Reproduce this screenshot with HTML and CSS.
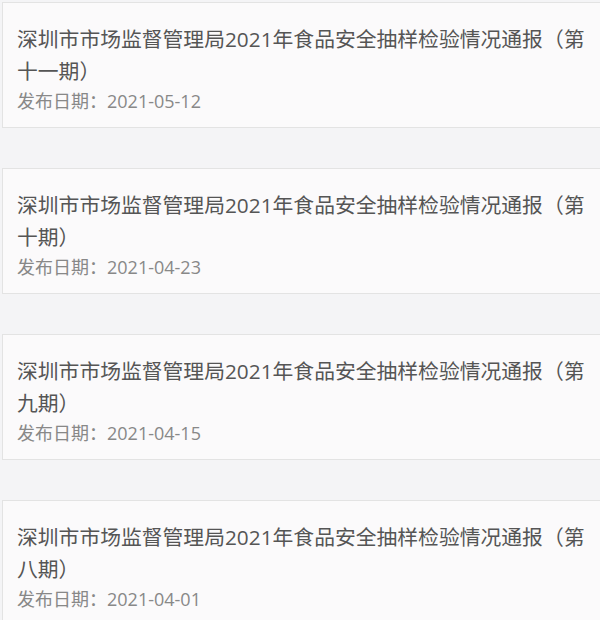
FILE: index.html
```html
<!DOCTYPE html>
<html lang="zh-CN">
<head>
    <meta charset="UTF-8">
    <meta name="viewport" content="width=device-width, initial-scale=1.0">
    <title>抽样检验情况通报</title>
    <link rel="stylesheet" href="styles.css">
</head>
<body>
    <div class="notice-list">
        <div class="notice">
            <p class="notice-title">深圳市市场监督管理局2021年食品安全抽样检验情况通报（第十一期）</p>
            <p class="notice-date">发布日期：2021-05-12</p>
        </div>
        <div class="notice">
            <p class="notice-title">深圳市市场监督管理局2021年食品安全抽样检验情况通报（第十期）</p>
            <p class="notice-date">发布日期：2021-04-23</p>
        </div>
        <div class="notice">
            <p class="notice-title">深圳市市场监督管理局2021年食品安全抽样检验情况通报（第九期）</p>
            <p class="notice-date">发布日期：2021-04-15</p>
        </div>
        <div class="notice">
            <p class="notice-title">深圳市市场监督管理局2021年食品安全抽样检验情况通报（第八期）</p>
            <p class="notice-date">发布日期：2021-04-01</p>
        </div>
    </div>
</body>
</html>
```

FILE: styles.css
```css
body {
    margin: 0;
    overflow: hidden;
    background-color: #f4f4f6;
    font-family: "Open Sans", "Noto Sans CJK SC", sans-serif;
}
.notice-list {
    display: flex;
    flex-direction: column;
    gap: 40px;
    padding-top: 2px;
    padding-left: 2px;
}
.notice {
    width: 610px;
    box-sizing: border-box;
    padding: 20px 10px 12px 14px;
    background-color: #fbfafb;
    border: 1px solid #e3e3e3;
}
.notice-title {
    margin: 0;
    width: 578px;
    font-size: 20.8px;
    line-height: 32px;
    color: #555;
}
.notice-date {
    margin: 0;
    font-size: 18px;
    line-height: 28px;
    color: #888;
}
```
